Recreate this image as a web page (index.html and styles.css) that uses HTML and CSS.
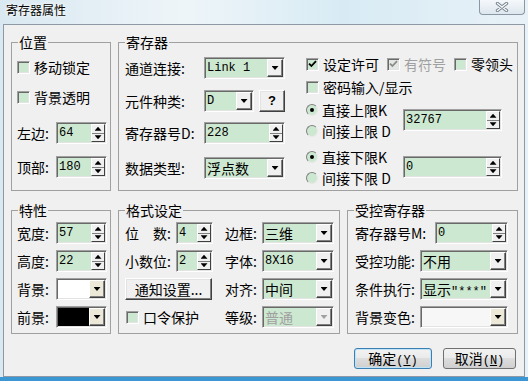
FILE: index.html
```html
<!DOCTYPE html>
<html lang="zh-CN">
<head>
  <meta charset="UTF-8" />
  <title>寄存器属性</title>
  <link rel="stylesheet" href="styles.css">
</head>
<body>
  <div class="window">
    <div class="titlebar">
      <span class="title">寄存器属性</span>
      <button type="button" class="close" aria-label="关闭">
        <svg width="14" height="10" viewBox="0 0 14 10">
          <path d="M2.5 1.5L11.5 8.5M11.5 1.5L2.5 8.5" stroke="#7a8793" stroke-width="3.4" stroke-linecap="round" fill="none"/>
          <path d="M2.5 1.5L11.5 8.5M11.5 1.5L2.5 8.5" stroke="#fbfcfd" stroke-width="1.3" stroke-linecap="round" fill="none"/>
        </svg>
      </button>
    </div>

    <div class="client">
      <div class="row row-top">
        <!-- 位置 -->
        <fieldset class="group g-pos">
          <legend>位置</legend>
          <div class="body pos-body">
            <label class="check"><span class="box"></span>移动锁定</label>
            <label class="check mt10"><span class="box"></span>背景透明</label>
            <div class="field mt15">
              <span class="lbl w39">左边:</span>
              <span class="edit w51"><span class="val">64</span><span class="spin"><i></i><i></i></span></span>
            </div>
            <div class="field mt12">
              <span class="lbl w39">顶部:</span>
              <span class="edit w51"><span class="val">180</span><span class="spin"><i></i><i></i></span></span>
            </div>
          </div>
        </fieldset>

        <!-- 寄存器 -->
        <fieldset class="group g-reg">
          <legend>寄存器</legend>
          <div class="body reg-body">
            <div class="reg-left">
              <div class="field">
                <span class="lbl w79">通道连接:</span>
                <span class="edit w81"><span class="val">Link 1</span><span class="drop raised"></span></span>
              </div>
              <div class="field mt11">
                <span class="lbl w79">元件种类:</span>
                <span class="edit w50"><span class="val">D</span><span class="drop raised"></span></span>
                <button type="button" class="btn3d help">?</button>
              </div>
              <div class="field mt10">
                <span class="lbl w79">寄存器号D:</span>
                <span class="edit w81"><span class="val">228</span><span class="spin"><i></i><i></i></span></span>
              </div>
              <div class="field mt13">
                <span class="lbl w79">数据类型:</span>
                <span class="edit w81"><span class="val cjk">浮点数</span><span class="drop raised"></span></span>
              </div>
            </div>

            <div class="reg-right">
              <div class="checks">
                <label class="check"><span class="box"><svg width="9" height="8" viewBox="0 0 9 8"><path d="M1 3.6L3.4 6L8 1.2" stroke="#000" stroke-width="1.8" fill="none"/></svg></span>设定许可</label>
                <label class="check off"><span class="box"><svg width="9" height="8" viewBox="0 0 9 8"><path d="M1 3.6L3.4 6L8 1.2" stroke="#8c8c8c" stroke-width="1.8" fill="none"/></svg></span>有符号</label>
                <label class="check"><span class="box"></span>零领头</label>
              </div>
              <div class="checks mt5">
                <label class="check"><span class="box"></span>密码输入/显示</label>
              </div>

              <div class="limit mt3">
                <div class="radios">
                  <div class="opt"><span class="radio on"></span>直接上限K</div>
                  <div class="opt"><span class="radio"></span>间接上限 D</div>
                </div>
                <span class="edit w99"><span class="val">32767</span><span class="spin"><i></i><i></i></span></span>
              </div>
              <div class="limit mt5">
                <div class="radios">
                  <div class="opt"><span class="radio on"></span>直接下限K</div>
                  <div class="opt"><span class="radio"></span>间接下限 D</div>
                </div>
                <span class="edit w99"><span class="val">0</span><span class="spin"><i></i><i></i></span></span>
              </div>
            </div>
          </div>
        </fieldset>
      </div>

      <div class="row row-bottom">
        <!-- 特性 -->
        <fieldset class="group g-attr">
          <legend>特性</legend>
          <div class="body stack attr-body">
            <div class="field">
              <span class="lbl w39">宽度:</span>
              <span class="edit w51"><span class="val">57</span><span class="spin"><i></i><i></i></span></span>
            </div>
            <div class="field">
              <span class="lbl w39">高度:</span>
              <span class="edit w51"><span class="val">22</span><span class="spin"><i></i><i></i></span></span>
            </div>
            <div class="field">
              <span class="lbl w39">背景:</span>
              <span class="edit w51 color"><span class="swatch white"></span><span class="drop raised beige"></span></span>
            </div>
            <div class="field">
              <span class="lbl w39">前景:</span>
              <span class="edit w51 color"><span class="swatch black"></span><span class="drop raised beige"></span></span>
            </div>
          </div>
        </fieldset>

        <!-- 格式设定 -->
        <fieldset class="group g-fmt">
          <legend>格式设定</legend>
          <div class="body fmt-body">
            <div class="field">
              <span class="lbl w51">位　数:</span>
              <span class="edit w37"><span class="val">4</span><span class="spin"><i></i><i></i></span></span>
            </div>
            <div class="field">
              <span class="lbl w37">边框:</span>
              <span class="edit w72"><span class="val cjk">三维</span><span class="drop raised"></span></span>
            </div>
            <div class="field">
              <span class="lbl w51">小数位:</span>
              <span class="edit w37"><span class="val">2</span><span class="spin"><i></i><i></i></span></span>
            </div>
            <div class="field">
              <span class="lbl w37">字体:</span>
              <span class="edit w72"><span class="val">8X16</span><span class="drop raised"></span></span>
            </div>
            <div class="field">
              <button type="button" class="btn3d notify">通知设置...</button>
            </div>
            <div class="field">
              <span class="lbl w37">对齐:</span>
              <span class="edit w72"><span class="val cjk">中间</span><span class="drop raised"></span></span>
            </div>
            <div class="field">
              <label class="check pwd"><span class="box"></span>口令保护</label>
            </div>
            <div class="field">
              <span class="lbl w37">等级:</span>
              <span class="edit w72 disabled"><span class="val cjk">普通</span><span class="drop raised"></span></span>
            </div>
          </div>
        </fieldset>

        <!-- 受控寄存器 -->
        <fieldset class="group g-ctl">
          <legend>受控寄存器</legend>
          <div class="body stack ctl-body">
            <div class="field">
              <span class="lbl w80">寄存器号M:</span>
              <span class="edit w73"><span class="val">0</span><span class="spin"><i></i><i></i></span></span>
            </div>
            <div class="field">
              <span class="lbl w65">受控功能:</span>
              <span class="edit w88"><span class="val cjk">不用</span><span class="drop raised"></span></span>
            </div>
            <div class="field">
              <span class="lbl w65">条件执行:</span>
              <span class="edit w88"><span class="val cjk">显示<span class="mono">"***"</span></span><span class="drop raised"></span></span>
            </div>
            <div class="field">
              <span class="lbl w65">背景变色:</span>
              <span class="edit w88 color"><span class="swatch pale"></span><span class="drop raised beige"></span></span>
            </div>
          </div>
        </fieldset>
      </div>

      <div class="actions">
        <button type="button" class="btn default">确定<span class="mono">(<u>Y</u>)</span></button>
        <button type="button" class="btn">取消<span class="mono">(<u>N</u>)</span></button>
      </div>
    </div>
  </div>
</body>
</html>
```

FILE: styles.css
```css
* {
  box-sizing: border-box;
}
body {
  margin: 0;
  font-family: "Noto Sans CJK SC", "Liberation Sans", sans-serif;
  font-size: 14px;
  color: #000;
}

/* window frame */
.window {
  width: 528px;
  height: 381px;
  display: flex;
  flex-direction: column;
  background: linear-gradient(90deg, #d9e8f1, #eef5f9 35%, #d8ebf4 65%, #e8f1f7);
  border-bottom: 4px solid #3b97d3;
}
.titlebar {
  height: 24px;
  flex: none;
  display: flex;
  justify-content: space-between;
  align-items: flex-start;
  padding-left: 6px;
}
.title {
  font-size: 12px;
  line-height: 20px;
  text-shadow: 0 0 5px #fff, 0 0 2px #fff;
}
.close {
  width: 46px;
  height: 15px;
  margin-right: 3px;
  padding: 0;
  border: 1px solid #8a98a6;
  border-top: 0;
  border-radius: 0 0 4px 4px;
  background: linear-gradient(#f5f8fb, #dde6ee);
  display: flex;
  align-items: center;
  justify-content: center;
}
.client {
  flex: 1;
  margin: 0 3px;
  border: 1px solid #8d99a5;
  background: #f0f0f0;
  padding: 10px 0 0 7px;
}

/* group boxes */
.row {
  display: flex;
  gap: 7px;
}
.row-top {
  height: 156px;
}
.row-bottom {
  height: 131px;
  margin-top: 12px;
}
.group {
  margin: 0;
  padding: 0;
  min-width: 0;
  border: 1px solid #a0a0a0;
}
.group legend {
  margin-left: 6px;
  padding: 0 1px;
  font-size: 14px;
  line-height: 14px;
}
.g-pos, .g-attr {
  width: 100px;
}
.g-reg {
  width: 400px;
}
.g-fmt {
  width: 222px;
}
.g-ctl {
  width: 171px;
}

.pos-body {
  padding: 8px 0 0 5px;
}
.reg-body {
  display: flex;
  align-items: flex-start;
  padding: 6px 0 0 6px;
}
.reg-left {
  width: 160px;
  margin-top: 2px;
}
.reg-right {
  margin-left: 21px;
}
.stack {
  display: flex;
  flex-direction: column;
  gap: 6px;
}
.attr-body {
  padding: 5px 0 0 5px;
}
.ctl-body {
  padding: 5px 0 0 7px;
}
.fmt-body {
  display: grid;
  grid-template-columns: 88px auto;
  grid-auto-rows: 22px;
  column-gap: 12px;
  row-gap: 6px;
  padding: 5px 0 0 6px;
}

.mt3 { margin-top: 3px; }
.mt5 { margin-top: 5px; }
.mt10 { margin-top: 10px; }
.mt11 { margin-top: 11px; }
.mt12 { margin-top: 12px; }
.mt13 { margin-top: 13px; }
.mt15 { margin-top: 15px; }

/* labels and rows */
.field {
  display: flex;
  align-items: center;
  height: 22px;
}
.lbl {
  flex: none;
  white-space: nowrap;
  line-height: 18px;
}
.w37 { width: 37px; }
.w39 { width: 39px; }
.w50 { width: 50px; }
.w51 { width: 51px; }
.w65 { width: 65px; }
.w72 { width: 72px; }
.w73 { width: 73px; }
.w79 { width: 79px; }
.w80 { width: 80px; }
.w81 { width: 81px; }
.w88 { width: 88px; }
.w99 { width: 99px; }

.check {
  display: flex;
  align-items: center;
  height: 20px;
  line-height: 18px;
  white-space: nowrap;
}
.check.off {
  color: #a0a0a0;
}
.box {
  flex: none;
  width: 13px;
  height: 13px;
  margin-right: 4px;
  border: 1px solid;
  border-color: #a0a0a0 #fff #fff #a0a0a0;
  box-shadow: inset 1px 1px #696969, inset -1px -1px #e3e3e3;
  background: #cde8d0;
  display: flex;
  align-items: center;
  justify-content: center;
}
.check.off .box {
  background: #e4e8e4;
}
.pwd {
  margin-left: 1px;
}
.checks {
  display: flex;
  gap: 8px;
}
.checks .check {
  height: 18px;
}

.limit {
  display: flex;
  align-items: center;
}
.radios {
  width: 97px;
}
.opt {
  display: flex;
  align-items: center;
  height: 21px;
  line-height: 18px;
  white-space: nowrap;
}
.radio {
  flex: none;
  width: 12px;
  height: 12px;
  margin-right: 4px;
  border-radius: 50%;
  border: 1px solid;
  border-color: #808080 #e8e8e8 #e8e8e8 #808080;
  background: #cde8d0;
  display: flex;
  align-items: center;
  justify-content: center;
}
.radio.on::after {
  content: "";
  width: 4px;
  height: 4px;
  border-radius: 50%;
  background: #000;
}

/* edit / combo boxes */
.edit {
  flex: none;
  display: flex;
  height: 22px;
  border: 1px solid;
  border-color: #a0a0a0 #fff #fff #a0a0a0;
  padding: 1px;
  box-shadow: inset 1px 1px #696969, inset -1px -1px #e3e3e3;
  background: #cde8d0;
}
.val {
  flex: 1;
  min-width: 0;
  padding-left: 1px;
  font-family: "Liberation Mono", "DejaVu Sans Mono", monospace;
  font-size: 12px;
  line-height: 18px;
  white-space: nowrap;
  overflow: hidden;
}
.val.cjk {
  font-family: "Noto Sans CJK SC", "Liberation Sans", sans-serif;
  font-size: 14px;
}
.mono {
  font-family: "Liberation Mono", "DejaVu Sans Mono", monospace;
  font-size: 12px;
}
.edit.disabled .val {
  color: #a0a0a0;
}
.edit.disabled .drop::after {
  background: #a0a0a0;
}
.edit.color {
  background: #f0f0f0;
}
.swatch {
  flex: 1;
}
.swatch.white {
  background: #fff;
}
.swatch.black {
  background: #000;
}
.swatch.pale {
  background: #f7f7f7;
}

.raised {
  background: #f0f0f0;
  border: 1px solid;
  border-color: #fff #404040 #404040 #fff;
  box-shadow: inset -1px -1px #808080;
}
.drop {
  flex: none;
  width: 16px;
  display: flex;
  align-items: center;
  justify-content: center;
}
.drop.beige {
  background: #ece9d8;
}
.drop::after {
  content: "";
  width: 7px;
  height: 4px;
  background: #000;
  clip-path: polygon(0 0, 100% 0, 50% 100%);
}
.spin {
  flex: none;
  width: 14px;
  display: flex;
  flex-direction: column;
  background: #f0f0f0;
  border: 1px solid;
  border-color: #fff #404040 #404040 #fff;
}
.spin i {
  flex: 1;
  display: flex;
  align-items: center;
  justify-content: center;
}
.spin i + i {
  border-top: 1px solid #808080;
}
.spin i::after {
  content: "";
  width: 7px;
  height: 4px;
  background: #000;
  clip-path: polygon(50% 0, 100% 100%, 0 100%);
}
.spin i + i::after {
  clip-path: polygon(0 0, 100% 0, 50% 100%);
}

/* buttons */
.btn3d {
  height: 22px;
  padding: 0;
  font: inherit;
  line-height: 18px;
  color: #000;
  background: #f0f0f0;
  border: 1px solid;
  border-color: #fff #404040 #404040 #fff;
  box-shadow: inset -1px -1px #808080, inset 1px 1px #e3e3e3;
}
.help {
  width: 26px;
  margin-left: 5px;
  font-family: "Liberation Sans", sans-serif;
  font-weight: bold;
  font-size: 13px;
}
.notify {
  width: 87px;
  white-space: nowrap;
}
.actions {
  width: 505px;
  margin-top: 14px;
  display: flex;
  justify-content: flex-end;
  gap: 11px;
}
.btn {
  height: 21px;
  width: 73px;
  padding: 0;
  font: inherit;
  line-height: 18px;
  color: #000;
  border: 1px solid #707070;
  border-radius: 3px;
  background: linear-gradient(#f2f2f2, #ebebeb 45%, #dddddd 50%, #cfcfcf);
}
.btn.default {
  width: 78px;
  border-color: #3c7fb1;
  box-shadow: inset 0 0 0 1px #bfe3f7;
}
```
